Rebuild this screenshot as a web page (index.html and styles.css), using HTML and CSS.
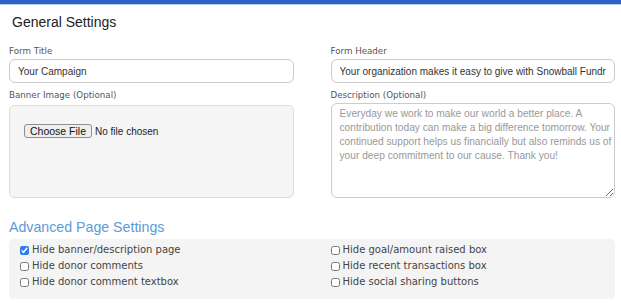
FILE: index.html
```html
<!DOCTYPE html>
<html lang="en">
<head>
  <meta charset="UTF-8" />
  <meta name="viewport" content="width=device-width, initial-scale=1.0" />
  <title>General Settings</title>
  <link rel="stylesheet" href="styles.css">
</head>
<body>
  <div class="topbar"></div>

  <div class="page">
    <h2 class="section-title">General Settings</h2>

    <div class="form-grid">
      <div class="field">
        <label for="formTitle">Form Title</label>
        <input type="text" id="formTitle" class="text-input" value="Your Campaign" />
      </div>
      <div class="field">
        <label for="formHeader">Form Header</label>
        <input type="text" id="formHeader" class="text-input" value="Your organization makes it easy to give with Snowball Fundraising!" />
      </div>

      <div class="field">
        <label for="banner">Banner Image (Optional)</label>
        <div class="banner-box">
          <input type="file" id="banner" class="file-input" />
        </div>
      </div>
      <div class="field">
        <label for="description">Description (Optional)</label>
        <textarea id="description" class="text-area" placeholder="Everyday we work to make our world a better place. A contribution today can make a big difference tomorrow. Your continued support helps us financially but also reminds us of your deep commitment to our cause. Thank you!"></textarea>
      </div>
    </div>

    <h2 class="section-title advanced">Advanced Page Settings</h2>

    <div class="options">
      <div class="options-col left">
        <label class="check"><input type="checkbox" checked />Hide banner/description page</label>
        <label class="check"><input type="checkbox" />Hide donor comments</label>
        <label class="check"><input type="checkbox" />Hide donor comment textbox</label>
      </div>
      <div class="options-col">
        <label class="check"><input type="checkbox" />Hide goal/amount raised box</label>
        <label class="check"><input type="checkbox" />Hide recent transactions box</label>
        <label class="check"><input type="checkbox" />Hide social sharing buttons</label>
      </div>
    </div>
  </div>
</body>
</html>
```

FILE: styles.css
```css
body {
  margin: 0;
  font-family: "Liberation Sans", Arial, sans-serif;
  color: #333;
  background: white;
}

.topbar {
  height: 4px;
  background: #2e63c6;
  border-bottom: 1px solid #b7cbee;
}

.page {
  padding: 0 6px 0 9px;
}

.section-title {
  margin: 7px 0 0 3px;
  font-size: 14px;
  line-height: 20px;
  font-weight: normal;
  color: #222;
}

.section-title.advanced {
  margin: 19px 0 2px 0;
  font-size: 14.2px;
  color: #5b9bd8;
}

.form-grid {
  display: grid;
  grid-template-columns: 1fr 1fr;
  column-gap: 37px;
  row-gap: 6px;
  margin-top: 13px;
}

.field label {
  display: block;
  font-family: "DejaVu Sans", Verdana, sans-serif;
  font-size: 8.7px;
  line-height: 13px;
  color: #555;
}

.text-input {
  box-sizing: border-box;
  width: 100%;
  height: 24px;
  margin-top: 1px;
  padding: 0 8px;
  border: 1px solid #ccc;
  border-radius: 6px;
  font-family: "Liberation Sans", Arial, sans-serif;
  font-size: 10px;
  color: #333;
}

.banner-box {
  box-sizing: border-box;
  height: 93px;
  margin-top: 3px;
  padding: 15px 14px;
  background: #f5f5f5;
  border: 1px solid #ddd;
  border-radius: 5px;
}

.file-input {
  font-family: "Liberation Sans", Arial, sans-serif;
  font-size: 10px;
  color: #222;
}

.file-input::file-selector-button {
  font-family: "Liberation Sans", Arial, sans-serif;
  font-size: 10.5px;
  padding: 0 5px;
  height: 14px;
  margin-right: 3px;
  background: #efefef;
  border: 1px solid #8f8f8f;
  border-radius: 3px;
  color: #111;
}

.text-area {
  box-sizing: border-box;
  display: block;
  width: 100%;
  height: 95px;
  margin-top: 1px;
  padding: 3px 0 3px 8px;
  border: 1px solid #ccc;
  border-radius: 6px;
  font-family: "Liberation Sans", Arial, sans-serif;
  font-size: 10.2px;
  line-height: 14px;
  color: #333;
}

.text-area::placeholder {
  color: #999;
}

.options {
  display: grid;
  grid-template-columns: 1fr 1fr;
  column-gap: 37px;
  padding: 3px 0 9px;
  background: #f4f4f4;
  border-radius: 5px;
}

.options-col.left {
  padding-left: 11px;
}

.check {
  display: flex;
  align-items: center;
  font-family: "DejaVu Sans", Verdana, sans-serif;
  font-size: 10px;
  line-height: 16px;
  color: #444;
}

.check input {
  width: 9px;
  height: 9px;
  margin: 0 3px 0 0;
  accent-color: #2f7bf0;
}
```
